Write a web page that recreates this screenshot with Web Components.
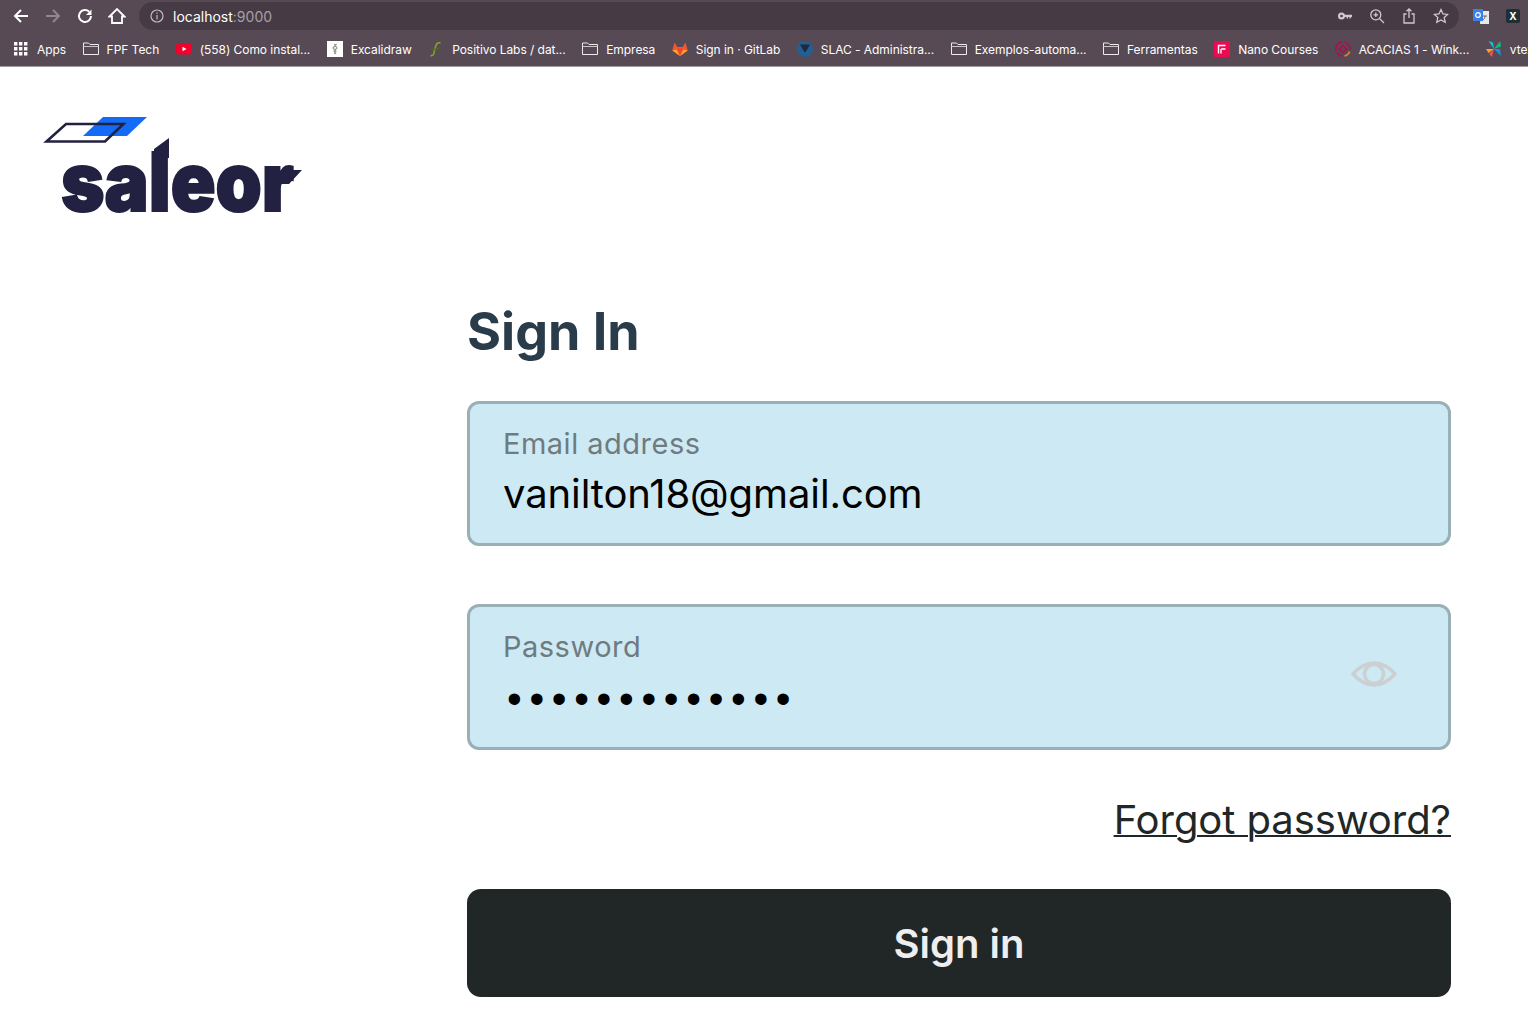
<!DOCTYPE html>
<html>
<head>
<meta charset="utf-8">
<title>Sign In</title>
<style>
	html, body { margin: 0; padding: 0; background: #fff; }
	body { font-family: Inter, "Liberation Sans", sans-serif; overflow: hidden; }
</style>
</head>
<body>
<browser-chrome url-host="localhost" url-port=":9000">
	<bookmark-item icon="apps">Apps</bookmark-item>
	<bookmark-item icon="folder">FPF Tech</bookmark-item>
	<bookmark-item icon="youtube">(558) Como instal...</bookmark-item>
	<bookmark-item icon="excalidraw">Excalidraw</bookmark-item>
	<bookmark-item icon="positivo">Positivo Labs / dat...</bookmark-item>
	<bookmark-item icon="folder">Empresa</bookmark-item>
	<bookmark-item icon="gitlab">Sign in · GitLab</bookmark-item>
	<bookmark-item icon="slac">SLAC - Administra...</bookmark-item>
	<bookmark-item icon="folder">Exemplos-automa...</bookmark-item>
	<bookmark-item icon="folder">Ferramentas</bookmark-item>
	<bookmark-item icon="nano">Nano Courses</bookmark-item>
	<bookmark-item icon="acacias">ACACIAS 1 - Wink...</bookmark-item>
	<bookmark-item icon="vtex">vtex</bookmark-item>
</browser-chrome>
<saleor-logo></saleor-logo>
<login-form>
	<text-field style="height: 145px" label="Email address" value="vanilton18@gmail.com"></text-field>
	<text-field label="Password" value="•••••••••••••" type="password"></text-field>
</login-form>

<script>
const bookmarkIcons = {
	apps: `<svg viewBox="0 0 16 16" fill="#fff"><path d="M1 1h3.400v3.400H1zM6 1h3.400v3.400H6zM11 1h3.400v3.400H11zM1 6h3.400v3.400H1zM6 6h3.400v3.400H6zM11 6h3.400v3.400H11zM1 11h3.400v3.400H1zM6 11h3.400v3.400H6zM11 11h3.400v3.400H11z"/></svg>`,
	folder: `<svg viewBox="0 0 16 16" fill="none" stroke="#eeeaed" stroke-width="1"><path d="M.5 13.500v-11.500h5l1.500 1.500h8.500v10z"/><path d="M.5 5.500h15" stroke="#c9c3c7"/></svg>`,
	youtube: `<svg viewBox="0 0 16 16"><rect x="0" y="2.500" width="16" height="11" rx="3" fill="#f4002c"/><path d="M6.500 5.700l4 2.300-4 2.300z" fill="#fff"/></svg>`,
	excalidraw: `<svg viewBox="0 0 16 16"><rect width="16" height="16" fill="#fff"/><path d="M7 3l3 4-3 3 2 3M9.500 3L6 7l3 3-1.500 3" fill="none" stroke="#999" stroke-width="1.200"/></svg>`,
	positivo: `<svg viewBox="0 0 16 16" fill="none" stroke-width="1.600"><path d="M2.500 14.500c3.500 1 3.500-3 4.500-7s2-6.500 5.500-5.500" stroke="#7fa52c"/><path d="M3.500 8.500c3 0 6 0 8-2" stroke="#4f6a22"/></svg>`,
	gitlab: `<svg viewBox="0 0 16 16"><path d="M8 15L.2 9.500 2.600 1.500 5.200 6h5.600l2.600-4.500 2.400 8z" fill="#f0582f"/><path d="M8 15L5.200 7.500h5.600z" fill="#f5402b"/><path d="M8 15L.4 9.500 4.500 8.500zM8 15l7.600-5.500-4.100-1z" fill="#fba42c"/></svg>`,
	slac: `<svg viewBox="0 0 16 16"><circle cx="8" cy="8" r="8" fill="#235f93"/><path d="M3 3.500h10L8.700 11H7.300z" fill="#1d2b3c"/></svg>`,
	nano: `<svg viewBox="0 0 16 16"><rect width="16" height="16" fill="#ec0b52"/><path d="M4.500 12.500V4.500h7M7 8h4.500M7 8v4.500" fill="none" stroke="#fff" stroke-width="1.400"/></svg>`,
	acacias: `<svg viewBox="0 0 16 16" fill="none" stroke-width="1.700"><path d="M1.200 10.500A7.200 7.200 0 0 1 7 .9" stroke="#a8124e"/><path d="M9 .9a7.200 7.200 0 0 1 6 8" stroke="#a8124e"/><path d="M14.800 10.500A7.200 7.200 0 0 1 9.500 15" stroke="#e5802b"/><path d="M2 11.500a7.200 7.200 0 0 0 5 3.600" stroke="#a8124e"/><path d="M8 4.500L11.500 8 8 11.500 4.500 8z" stroke="#a8124e"/></svg>`,
	vtex: `<svg viewBox="0 0 16 16"><path d="M8 8L2.500 0 7 1.500z" fill="#18bfe0"/><path d="M8 8l6-8 1 5.500z" fill="#12b886"/><path d="M8 8l7 7-1-7z" fill="#1a8fe3"/><path d="M8 8l-2 8-3-3z" fill="#ef4a5d"/><path d="M8 8H0l2.500 4z" fill="#f5a623"/></svg>`
};

class BookmarkItem extends HTMLElement {
	constructor() {
		super();
		const shadow = this.attachShadow({mode: 'open'});
		const icon = bookmarkIcons[this.getAttribute('icon')] || '';
		shadow.innerHTML = `<style>
			:host {
				display: flex;
				align-items: center;
				gap: 8px;
				flex: none;
				font-size: 12px;
				letter-spacing: -.05px;
				color: #fff;
				white-space: nowrap;
			}
			.icon { width: 16px; height: 16px; flex: none; }
			.icon svg { display: block; width: 16px; height: 16px; }
			</style>
			<span class="icon">${icon}</span><slot></slot>`;
	}
}

class BrowserChrome extends HTMLElement {
	constructor() {
		super();
		const shadow = this.attachShadow({mode: 'open'});
		shadow.innerHTML = `<style>
			:host {
				display: block;
				background: #574a54;
				border-bottom: 1px solid #a39ca1;
				height: 66px;
				overflow: hidden;
			}
			.toolbar { display: flex; align-items: center; height: 32px; padding-left: 12px; box-sizing: border-box; }
			.nav { display: flex; gap: 14px; align-items: center; }
			.nav svg { display: block; width: 18px; height: 18px; }
			.pill {
				display: flex;
				align-items: center;
				flex: 1;
				height: 28px;
				margin: 0 69px 0 13px;
				padding: 0 10px;
				border-radius: 14px;
				background: #463b44;
				font-size: 14px;
				color: #a89fa6;
			}
			.pill b { font-weight: 400; color: #fff; }
			.info { width: 16px; height: 16px; margin-right: 8px; }
			.actions { margin-left: auto; display: flex; gap: 16px; }
			.actions svg { display: block; width: 16px; height: 16px; }
			.ext { position: absolute; top: 8px; width: 16px; height: 16px; }
			.bookmarks { display: flex; align-items: center; gap: 16.500px; height: 34px; padding-left: 13px; }
			</style>
			<div class="toolbar">
				<div class="nav">
					<svg viewBox="0 0 18 18" fill="none" stroke="#fff" stroke-width="2"><path d="M16 9H3M9 3L3 9l6 6"/></svg>
					<svg viewBox="0 0 18 18" fill="none" stroke="#91878e" stroke-width="2"><path d="M2 9h13M9 3l6 6-6 6"/></svg>
					<svg viewBox="0 0 18 18" fill="none" stroke="#fff" stroke-width="2"><path d="M15 9a6 6 0 1 1-1.800-4.300"/><path d="M15.500 2.500v5.500h-5.500z" fill="#fff" stroke="none"/></svg>
					<svg viewBox="0 0 18 18" fill="none" stroke="#fff" stroke-width="1.800"><path d="M1.500 9.500L9 2l7.500 7.500H14v6.500H4V9.500z"/></svg>
				</div>
				<div class="pill">
					<svg class="info" viewBox="0 0 16 16" fill="none" stroke="#c4bdc2" stroke-width="1.200"><circle cx="8" cy="8" r="6"/><path d="M8 7v4.500M8 4.500v1.200"/></svg>
					<span><b>${this.getAttribute('url-host')}</b>${this.getAttribute('url-port')}</span>
					<div class="actions">
						<svg viewBox="0 0 16 16" fill="#cfc9cd"><circle cx="4.500" cy="8" r="3.500"/><circle cx="4.500" cy="8" r="1.300" fill="#463b44"/><path d="M7 6.800h8v2.200h-1.200v1.500h-1.400V9H11v1.500H9.600V9H7z"/></svg>
						<svg viewBox="0 0 16 16" fill="none" stroke="#cfc9cd" stroke-width="1.300"><circle cx="6.800" cy="6.800" r="5"/><path d="M10.500 10.500l4.500 4.500M4.500 6.800h4.600M6.800 4.500v4.600"/></svg>
						<svg viewBox="0 0 16 16" fill="none" stroke="#cfc9cd" stroke-width="1.300"><path d="M5.500 6H3v9h10V6h-2.500M8 10V1M5.500 3.300L8 1l2.500 2.300"/></svg>
						<svg viewBox="0 0 16 16" fill="none" stroke="#cfc9cd" stroke-width="1.300"><path d="M8 1.500l2 4.400 4.700.5-3.500 3.200 1 4.700L8 11.900l-4.200 2.400 1-4.700L1.300 6.400 6 5.900z"/></svg>
					</div>
				</div>
				<svg class="ext" style="left:1473px" viewBox="0 0 16 16"><path d="M8 3h8v13H7z" fill="#e8e8e8"/><path d="M0 1h10v12H0z" fill="#3b7fe8"/><circle cx="5" cy="7" r="2.300" fill="none" stroke="#fff" stroke-width="1.200"/><path d="M10 8h4M12 8c0 2-1 3-2 4" fill="none" stroke="#666"/></svg>
				<svg class="ext" style="left:1505px" viewBox="0 0 16 16"><rect x="1" y="1" width="14" height="14" rx="2" fill="#1f2f35"/><text x="8" y="12" font-family="Inter" font-size="10" font-weight="700" fill="#fff" text-anchor="middle">X</text></svg>
			</div>
			<div class="bookmarks"><slot></slot></div>`;
	}
}

class SaleorLogo extends HTMLElement {
	constructor() {
		super();
		const shadow = this.attachShadow({mode: 'open'});
		shadow.innerHTML = `<style>
			:host { display: block; height: 154px; padding-left: 44px; box-sizing: border-box; padding-top: 48px; }
			svg { display: block; overflow: visible; }
			text { font-family: Inter, sans-serif; font-weight: 900; }
			</style>
			<svg width="260" height="100" viewBox="0 0 260 100">
				<path d="M39 21L59 2h44L83 21z" fill="#156bf5"/>
				<path d="M2.500 26.500L22 9h57.500L61 26.500z" fill="none" stroke="#232142" stroke-width="2.600"/>
				<text x="17" y="96" font-size="81" fill="#232142" stroke="#232142" stroke-width="2" textLength="233" lengthAdjust="spacingAndGlyphs">saleor</text>
				<!-- slanted cap of the l, and the r's tail -->
				<path d="M110 34l15-11v20h-15z" fill="#232142"/>
				<path d="M235 61l5-6h18l-13 14h-10z" fill="#232142"/>
			</svg>`;
	}
}

class TextField extends HTMLElement {
	constructor() {
		super();
		const shadow = this.attachShadow({mode: 'open'});
		const isPassword = this.getAttribute('type') === 'password';
		shadow.innerHTML = `<style>
			:host {
				display: flex;
				align-items: flex-start;
				justify-content: space-between;
				height: 146px;
				box-sizing: border-box;
				padding: 22px 51px 0 33px;
				background: #cde9f4;
				border: 3px solid #98b0b6;
				border-radius: 12px;
			}
			.label { font-size: 29px; line-height: 36px; letter-spacing: .5px; color: #6f7b7f; margin-bottom: 8px; }
			.value { font-size: 40px; line-height: 48px; letter-spacing: -.1px; color: #000; }
			.value.dots { font-size: 42px; letter-spacing: 7.700px; padding-top: 2px; margin-left: 4px; font-family: "Liberation Sans", sans-serif; }
			svg { display: block; width: 46px; height: 26px; margin-top: 32px; }
			</style>
			<div>
				<div class="label">${this.getAttribute('label')}</div>
				<div class="value${isPassword ? ' dots' : ''}">${this.getAttribute('value')}</div>
			</div>
			${isPassword ? `<svg viewBox="0 0 46 26" fill="none" stroke="#cbd0d2" stroke-width="3.500"><path d="M2 13C9 5 15 2 23 2s14 3 21 11c-7 8-13 11-21 11S9 21 2 13z"/><circle cx="23" cy="13" r="9.500"/></svg>` : ''}`;
	}
}

class LoginForm extends HTMLElement {
	constructor() {
		super();
		const shadow = this.attachShadow({mode: 'open'});
		shadow.innerHTML = `<style>
			:host { display: block; width: 984px; margin-left: 467px; }
			h1 { margin: 0 0 38px; padding-top: 80px; font-size: 52px; line-height: 62px; font-weight: 700; color: #2a3b4a; }
			.fields { display: flex; flex-direction: column; gap: 58px; }
			.forgot { display: block; text-align: right; margin-top: 46px; font-size: 40px; line-height: 48px; letter-spacing: -.05px; color: #212627; text-decoration: underline; text-decoration-thickness: 2px; }
			button {
				display: block;
				width: 100%;
				height: 108px;
				margin-top: 45px;
				border: 0;
				border-radius: 14px;
				background: #212627;
				color: #eeeeee;
				font: 600 40px Inter, sans-serif;
			}
			</style>
			<h1>Sign In</h1>
			<div class="fields"><slot></slot></div>
			<a class="forgot">Forgot password?</a>
			<button>Sign in</button>`;
	}
}

customElements.define('bookmark-item', BookmarkItem);
customElements.define('browser-chrome', BrowserChrome);
customElements.define('saleor-logo', SaleorLogo);
customElements.define('text-field', TextField);
customElements.define('login-form', LoginForm);
</script>
</body>
</html>
